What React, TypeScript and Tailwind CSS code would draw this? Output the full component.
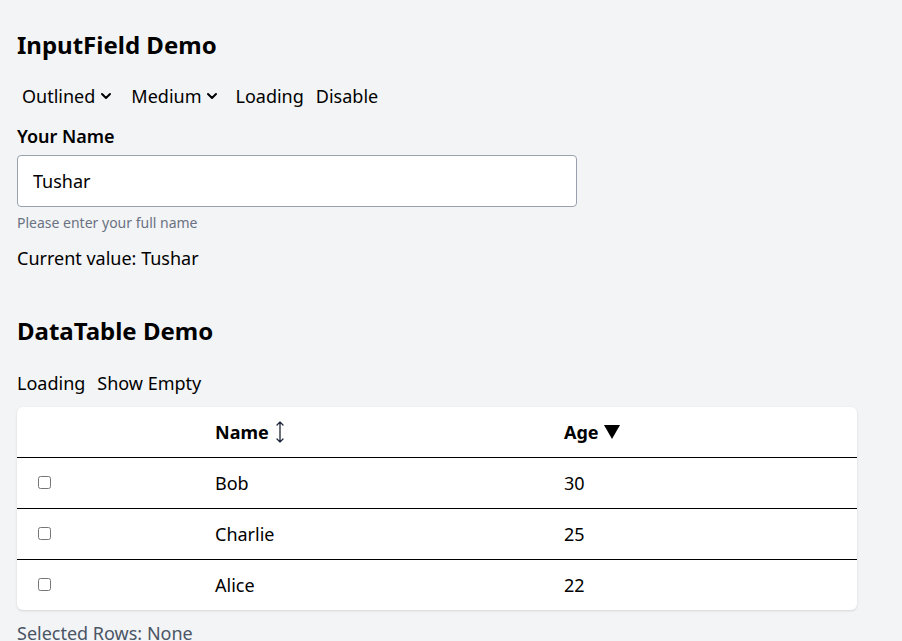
import { useState } from 'react';

type Row = { id: number; name: string; age: number };

const rows: Row[] = [
  { id: 2, name: 'Bob', age: 30 },
  { id: 3, name: 'Charlie', age: 25 },
  { id: 1, name: 'Alice', age: 22 },
];

function Chevron() {
  return (
    <svg width="12" height="12" viewBox="0 0 12 12" className="ml-[5px]">
      <path d="M2 4l4 4 4-4" fill="none" stroke="#000" strokeWidth="2" strokeLinecap="round" strokeLinejoin="round" />
    </svg>
  );
}

function SortBoth() {
  return (
    <svg width="10" height="24" viewBox="0 0 10 24" className="ml-[6px] inline-block align-middle">
      <path d="M5 2v20M2 5l3-3 3 3M2 19l3 3 3-3" fill="none" stroke="#1e293b" strokeWidth="1.3" strokeLinecap="round" strokeLinejoin="round" />
    </svg>
  );
}

function SortDown() {
  return (
    <svg width="16" height="14" viewBox="0 0 16 14" className="ml-[5px] inline-block align-middle">
      <path d="M0 0h16L8 14z" fill="#000" />
    </svg>
  );
}

export default function App() {
  const [name, setName] = useState('Tushar');
  const [selected, setSelected] = useState<number[]>([]);

  const toggle = (id: number) => {
    setSelected(prev => (prev.includes(id) ? prev.filter(x => x !== id) : [...prev, id]));
  };

  return (
    <div className="min-h-[641px] bg-gray-100 px-[17px] pt-[29px] pb-4 font-['Noto_Sans',sans-serif] text-black">
      {/* InputField */}
      <h2 className="text-2xl leading-8 font-bold">InputField Demo</h2>

      <div className="mt-[21px] flex items-center text-lg leading-7">
        <span className="ml-[5px] flex items-center">Outlined<Chevron /></span>
        <span className="ml-[19px] flex items-center">Medium<Chevron /></span>
        <span className="ml-[17px]">Loading</span>
        <span className="ml-[12px]">Disable</span>
      </div>

      <label htmlFor="name" className="mt-[12px] block text-lg leading-7 font-semibold">
        Your Name
      </label>
      <input
        id="name"
        value={name}
        onChange={e => setName(e.target.value)}
        className="mt-[5px] block h-[52px] w-[560px] rounded border border-gray-400 bg-white px-[15px] text-lg outline-none"
      />
      <p className="mt-[6px] text-sm leading-5 text-gray-500">Please enter your full name</p>
      <p className="mt-[11px] text-lg leading-7">Current value: {name}</p>

      {/* DataTable */}
      <h2 className="mt-[43px] text-2xl leading-8 font-bold">DataTable Demo</h2>
      <div className="mt-[22px] flex gap-3 text-lg leading-7">
        <span>Loading</span>
        <span>Show Empty</span>
      </div>

      <div className="mt-[10px] w-[840px] overflow-hidden rounded-md bg-white shadow-sm">
        <table className="w-full border-collapse text-left text-lg">
          <thead>
            <tr className="h-[50px] border-b border-black">
              <th className="w-[182px] px-4"></th>
              <th className="w-[349px] px-4 font-bold">
                <span className="inline-flex items-center">Name<SortBoth /></span>
              </th>
              <th className="px-4 font-bold">
                <span className="inline-flex items-center">Age<SortDown /></span>
              </th>
            </tr>
          </thead>
          <tbody>
            {rows.map((r, i) => (
              <tr key={r.id} className={i < rows.length - 1 ? 'h-[51px] border-b border-black' : 'h-[51px]'}>
                <td className="px-4">
                  <input
                    type="checkbox"
                    checked={selected.includes(r.id)}
                    onChange={() => toggle(r.id)}
                    className="ml-[5px] block h-[13px] w-[13px]"
                  />
                </td>
                <td className="px-4">{r.name}</td>
                <td className="px-4">{r.age}</td>
              </tr>
            ))}
          </tbody>
        </table>
      </div>

      <p className="mt-[9px] text-lg leading-7 text-gray-600">
        Selected Rows: {selected.length ? rows.filter(r => selected.includes(r.id)).map(r => r.name).join(', ') : 'None'}
      </p>
    </div>
  );
}
